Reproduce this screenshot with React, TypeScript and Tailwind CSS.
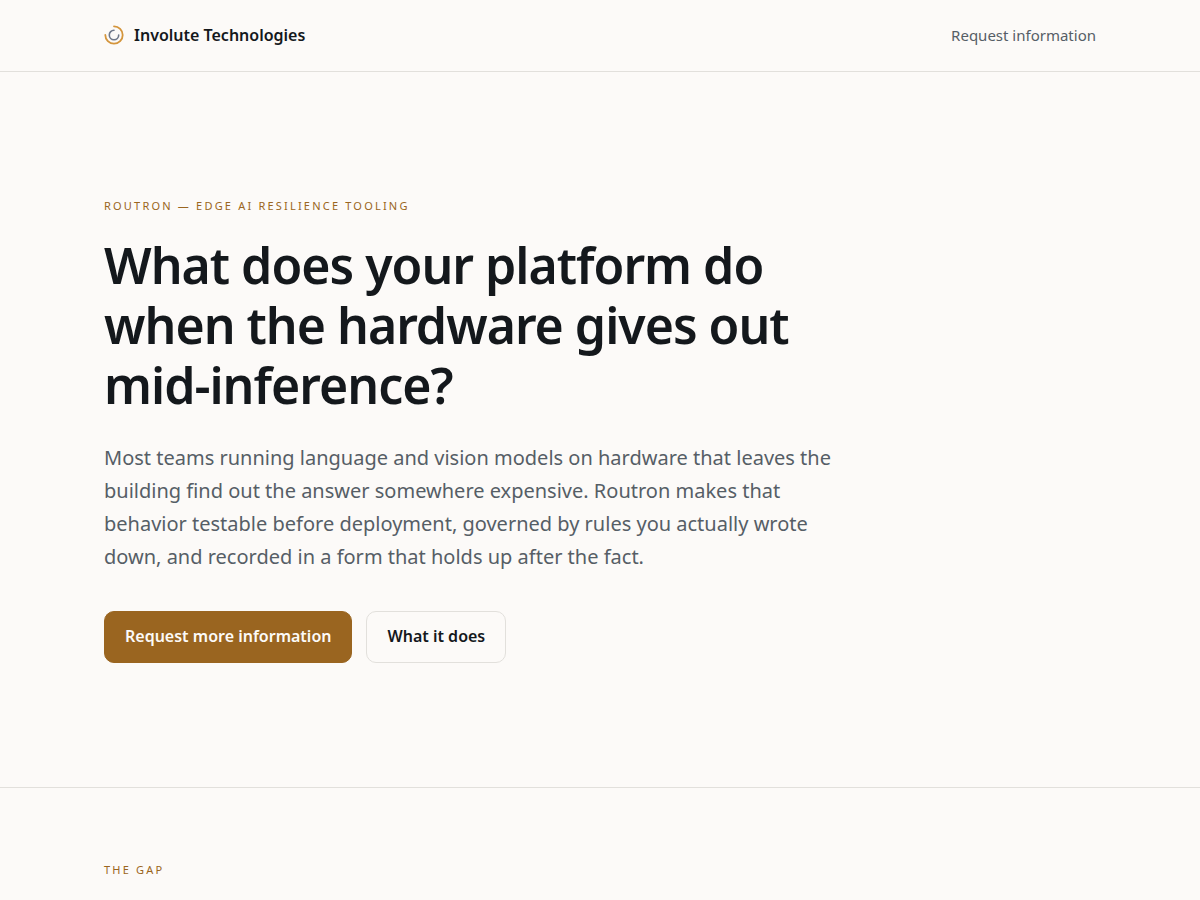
import React from 'react';

function LogoMark() {
  return (
    <svg viewBox="0 0 20 20" className="size-5" fill="none" strokeLinecap="round" aria-hidden="true">
      <path d="M10 1.3A8.7 8.7 0 1 1 1.3 10" stroke="#d4953c" strokeWidth="1.8" />
      <path d="M10 5.3A4.7 4.7 0 1 0 14.7 10" stroke="#6f788a" strokeWidth="1.6" />
    </svg>
  );
}

function Eyebrow({ children }: { children: React.ReactNode }) {
  return <p className="text-[11px] leading-[18px] tracking-[0.2em] uppercase text-[#9a6520]">{children}</p>;
}

export default function App() {
  return (
    <div className="min-h-screen bg-[#fcfaf8] font-['Noto_Sans',sans-serif] text-[#14181c]">
      <header className="border-b border-[#e2e0dc]">
        <div className="mx-auto flex max-w-[1040px] items-center justify-between px-6 pt-[22px] pb-[23px]">
          <a href="#top" className="flex items-center gap-2.5 text-base leading-[26px] font-semibold">
            <LogoMark />
            Involute Technologies
          </a>
          <a href="#contact" className="text-[15px] leading-[26px] text-[#565e66]">Request information</a>
        </div>
      </header>

      <main id="top">
        <section className="border-b border-[#e2e0dc]">
          <div className="mx-auto max-w-[1040px] px-6 pt-[125px] pb-[124px]">
            <Eyebrow>Routron — Edge AI resilience tooling</Eyebrow>
            <h1 className="mt-5 max-w-[740px] text-[50px] leading-[60px] font-semibold tracking-[-0.02em]">
              What does your platform do when the hardware gives out mid-inference?
            </h1>
            <p className="mt-[26px] max-w-[730px] text-xl leading-[33px] text-[#565e66]">
              Most teams running language and vision models on hardware that leaves the building find out the answer
              somewhere expensive. Routron makes that behavior testable before deployment, governed by rules you
              actually wrote down, and recorded in a form that holds up after the fact.
            </p>
            <div className="mt-[38px] flex flex-wrap gap-3.5 text-base leading-[25px] font-semibold">
              <a href="#contact" className="rounded-[10px] border border-[#9a6520] bg-[#9a6520] px-5 pt-3 pb-[13px] text-[#fcfaf8]">
                Request more information
              </a>
              <a href="#gap" className="rounded-[10px] border border-[#e2e0dc] px-5 pt-3 pb-[13px]">What it does</a>
            </div>
          </div>
        </section>

        <section id="gap">
          <div className="mx-auto max-w-[1040px] px-6 pt-[73px]">
            <Eyebrow>The gap</Eyebrow>
          </div>
        </section>
      </main>
    </div>
  );
}
